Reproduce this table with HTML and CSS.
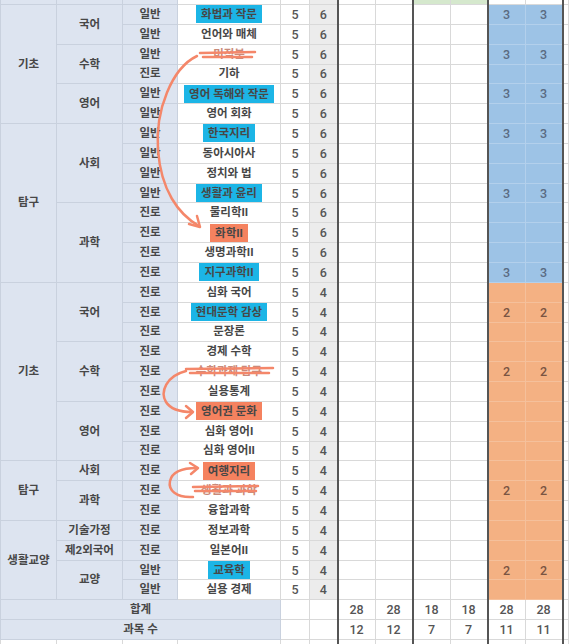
FILE: index.html
```html
<!DOCTYPE html>
<html lang="ko">
<head>
  <meta charset="UTF-8">
  <meta name="viewport" content="width=device-width, initial-scale=1.0">
  <title>교육과정 편성표</title>
  <link rel="stylesheet" href="styles.css">
</head>
<body>
  <div class="sheet">
    <table class="grid">
      <colgroup>
        <col class="c-area">
        <col class="c-subj">
        <col class="c-type">
        <col class="c-name">
        <col class="c-n1">
        <col class="c-n2">
        <col class="c-s sep">
        <col class="c-s">
        <col class="c-s sep">
        <col class="c-s">
        <col class="c-s sep">
        <col class="c-s">
        <col class="c-end sep">
      </colgroup>
      <tbody>
        <tr class="top">
          <td class="lbl"></td><td class="lbl"></td><td class="lbl"></td><td></td><td></td><td class="g"></td>
          <td></td><td></td><td class="grn"></td><td class="grn"></td><td></td><td></td><td></td>
        </tr>
        <!-- 6단위 -->
        <tr>
          <td class="lbl" rowspan="6">기초</td><td class="lbl" rowspan="2">국어</td><td class="lbl">일반</td>
          <td><span class="hl cyan">화법과 작문</span></td><td class="n">5</td><td class="n g">6</td>
          <td></td><td></td><td></td><td></td><td class="b">3</td><td class="b">3</td><td></td>
        </tr>
        <tr>
          <td class="lbl">일반</td><td>언어와 매체</td><td class="n">5</td><td class="n g">6</td>
          <td></td><td></td><td></td><td></td><td class="b"></td><td class="b"></td><td></td>
        </tr>
        <tr>
          <td class="lbl" rowspan="2">수학</td><td class="lbl">일반</td><td class="struck">미적분</td><td class="n">5</td><td class="n g">6</td>
          <td></td><td></td><td></td><td></td><td class="b">3</td><td class="b">3</td><td></td>
        </tr>
        <tr>
          <td class="lbl">진로</td><td>기하</td><td class="n">5</td><td class="n g">6</td>
          <td></td><td></td><td></td><td></td><td class="b"></td><td class="b"></td><td></td>
        </tr>
        <tr>
          <td class="lbl" rowspan="2">영어</td><td class="lbl">일반</td><td><span class="hl cyan">영어 독해와 작문</span></td><td class="n">5</td><td class="n g">6</td>
          <td></td><td></td><td></td><td></td><td class="b">3</td><td class="b">3</td><td></td>
        </tr>
        <tr>
          <td class="lbl">일반</td><td>영어 회화</td><td class="n">5</td><td class="n g">6</td>
          <td></td><td></td><td></td><td></td><td class="b"></td><td class="b"></td><td></td>
        </tr>
        <tr>
          <td class="lbl" rowspan="8">탐구</td><td class="lbl" rowspan="4">사회</td><td class="lbl">일반</td>
          <td><span class="hl cyan">한국지리</span></td><td class="n">5</td><td class="n g">6</td>
          <td></td><td></td><td></td><td></td><td class="b">3</td><td class="b">3</td><td></td>
        </tr>
        <tr>
          <td class="lbl">일반</td><td>동아시아사</td><td class="n">5</td><td class="n g">6</td>
          <td></td><td></td><td></td><td></td><td class="b"></td><td class="b"></td><td></td>
        </tr>
        <tr>
          <td class="lbl">일반</td><td>정치와 법</td><td class="n">5</td><td class="n g">6</td>
          <td></td><td></td><td></td><td></td><td class="b"></td><td class="b"></td><td></td>
        </tr>
        <tr>
          <td class="lbl">일반</td><td><span class="hl cyan">생활과 윤리</span></td><td class="n">5</td><td class="n g">6</td>
          <td></td><td></td><td></td><td></td><td class="b">3</td><td class="b">3</td><td></td>
        </tr>
        <tr>
          <td class="lbl" rowspan="4">과학</td><td class="lbl">진로</td><td>물리학II</td><td class="n">5</td><td class="n g">6</td>
          <td></td><td></td><td></td><td></td><td class="b"></td><td class="b"></td><td></td>
        </tr>
        <tr>
          <td class="lbl">진로</td><td><span class="hl coral">화학II</span></td><td class="n">5</td><td class="n g">6</td>
          <td></td><td></td><td></td><td></td><td class="b"></td><td class="b"></td><td></td>
        </tr>
        <tr>
          <td class="lbl">진로</td><td>생명과학II</td><td class="n">5</td><td class="n g">6</td>
          <td></td><td></td><td></td><td></td><td class="b"></td><td class="b"></td><td></td>
        </tr>
        <tr>
          <td class="lbl">진로</td><td><span class="hl cyan">지구과학II</span></td><td class="n">5</td><td class="n g">6</td>
          <td></td><td></td><td></td><td></td><td class="b">3</td><td class="b">3</td><td></td>
        </tr>
        <!-- 4단위 -->
        <tr>
          <td class="lbl" rowspan="9">기초</td><td class="lbl" rowspan="3">국어</td><td class="lbl">진로</td>
          <td>심화 국어</td><td class="n">5</td><td class="n g">4</td>
          <td></td><td></td><td></td><td></td><td class="o"></td><td class="o"></td><td></td>
        </tr>
        <tr>
          <td class="lbl">진로</td><td><span class="hl cyan">현대문학 감상</span></td><td class="n">5</td><td class="n g">4</td>
          <td></td><td></td><td></td><td></td><td class="o">2</td><td class="o">2</td><td></td>
        </tr>
        <tr>
          <td class="lbl">진로</td><td>문장론</td><td class="n">5</td><td class="n g">4</td>
          <td></td><td></td><td></td><td></td><td class="o"></td><td class="o"></td><td></td>
        </tr>
        <tr>
          <td class="lbl" rowspan="3">수학</td><td class="lbl">진로</td><td>경제 수학</td><td class="n">5</td><td class="n g">4</td>
          <td></td><td></td><td></td><td></td><td class="o"></td><td class="o"></td><td></td>
        </tr>
        <tr>
          <td class="lbl">진로</td><td class="struck">수학과제 탐구</td><td class="n">5</td><td class="n g">4</td>
          <td></td><td></td><td></td><td></td><td class="o">2</td><td class="o">2</td><td></td>
        </tr>
        <tr>
          <td class="lbl">진로</td><td>실용통계</td><td class="n">5</td><td class="n g">4</td>
          <td></td><td></td><td></td><td></td><td class="o"></td><td class="o"></td><td></td>
        </tr>
        <tr>
          <td class="lbl" rowspan="3">영어</td><td class="lbl">진로</td><td><span class="hl coral">영어권 문화</span></td><td class="n">5</td><td class="n g">4</td>
          <td></td><td></td><td></td><td></td><td class="o"></td><td class="o"></td><td></td>
        </tr>
        <tr>
          <td class="lbl">진로</td><td>심화 영어I</td><td class="n">5</td><td class="n g">4</td>
          <td></td><td></td><td></td><td></td><td class="o"></td><td class="o"></td><td></td>
        </tr>
        <tr>
          <td class="lbl">진로</td><td>심화 영어II</td><td class="n">5</td><td class="n g">4</td>
          <td></td><td></td><td></td><td></td><td class="o"></td><td class="o"></td><td></td>
        </tr>
        <tr>
          <td class="lbl" rowspan="3">탐구</td><td class="lbl">사회</td><td class="lbl">진로</td>
          <td><span class="hl coral">여행지리</span></td><td class="n">5</td><td class="n g">4</td>
          <td></td><td></td><td></td><td></td><td class="o"></td><td class="o"></td><td></td>
        </tr>
        <tr>
          <td class="lbl" rowspan="2">과학</td><td class="lbl">진로</td><td class="struck">생활과 과학</td><td class="n">5</td><td class="n g">4</td>
          <td></td><td></td><td></td><td></td><td class="o">2</td><td class="o">2</td><td></td>
        </tr>
        <tr>
          <td class="lbl">진로</td><td>융합과학</td><td class="n">5</td><td class="n g">4</td>
          <td></td><td></td><td></td><td></td><td class="o"></td><td class="o"></td><td></td>
        </tr>
        <tr>
          <td class="lbl" rowspan="4">생활교양</td><td class="lbl">기술가정</td><td class="lbl">진로</td>
          <td>정보과학</td><td class="n">5</td><td class="n g">4</td>
          <td></td><td></td><td></td><td></td><td class="o"></td><td class="o"></td><td></td>
        </tr>
        <tr>
          <td class="lbl">제2외국어</td><td class="lbl">진로</td><td>일본어II</td><td class="n">5</td><td class="n g">4</td>
          <td></td><td></td><td></td><td></td><td class="o"></td><td class="o"></td><td></td>
        </tr>
        <tr>
          <td class="lbl" rowspan="2">교양</td><td class="lbl">일반</td><td><span class="hl cyan">교육학</span></td><td class="n">5</td><td class="n g">4</td>
          <td></td><td></td><td></td><td></td><td class="o">2</td><td class="o">2</td><td></td>
        </tr>
        <tr>
          <td class="lbl">일반</td><td>실용 경제</td><td class="n">5</td><td class="n g">4</td>
          <td></td><td></td><td></td><td></td><td class="o"></td><td class="o"></td><td></td>
        </tr>
        <!-- 합계 -->
        <tr class="sum">
          <td class="lbl" colspan="4">합계</td><td></td><td class="w"></td>
          <td class="n">28</td><td class="n">28</td><td class="n">18</td><td class="n">18</td><td class="n">28</td><td class="n">28</td><td></td>
        </tr>
        <tr class="sum">
          <td class="lbl" colspan="4">과목 수</td><td></td><td class="w"></td>
          <td class="n">12</td><td class="n">12</td><td class="n">7</td><td class="n">7</td><td class="n">11</td><td class="n">11</td><td></td>
        </tr>
        <tr class="tail">
          <td></td><td></td><td></td><td></td><td></td><td class="w"></td>
          <td></td><td></td><td></td><td></td><td></td><td></td><td></td>
        </tr>
      </tbody>
    </table>

    <!-- 손글씨 표시: 취소선과 이동 화살표 -->
    <svg class="marks" width="569" height="644" viewBox="0 0 569 644">
      <g fill="none" stroke="#f4876a" stroke-width="2.5" stroke-linecap="round" stroke-linejoin="round">
        <path d="M200 53 L255 52"/>
        <path d="M203 57 L252 57"/>
        <path d="M197 56 C172 68 155 110 158 150 C161 190 178 214 199 226"/>
        <path d="M189 224 L200 227 L197 216"/>

        <path d="M186 369 L273 368"/>
        <path d="M190 373 L269 373"/>
        <path d="M186 371 C166 376 160 392 166 402 C171 410 181 412 192 412"/>
        <path d="M186 406 L193 412 L186 418"/>

        <path d="M193 487 L258 486"/>
        <path d="M195 491 L256 491"/>
        <path d="M193 497 C176 498 168 490 170 481 C172 472 183 468 197 468"/>
        <path d="M190 463 L198 468 L191 474"/>
      </g>
    </svg>
  </div>
</body>
</html>
```

FILE: styles.css
```css
:root {
  --line: #d9d9d9;
  --label-bg: #dde4f0;
  --label-line: #c9d1de;
  --gray-bg: #ececec;
  --blue-bg: #9dc3e6;
  --orange-bg: #f4b183;
  --green-bg: #d5e8cd;
  --cyan: #1cb5e6;
  --coral: #f5825f;
  --text: #474747;
}

* {
  margin: 0;
  padding: 0;
  box-sizing: border-box;
}

body {
  background: #ffffff;
  overflow: hidden;
  font-family: Roboto, "Noto Sans CJK KR", sans-serif;
  font-weight: 700;
  color: var(--text);
}

.sheet {
  position: relative;
  width: 569px;
  height: 644px;
}

.grid {
  width: 569px;
  table-layout: fixed;
  border-collapse: collapse;
  font-size: 11.5px;
  text-align: center;
}

.c-area { width: 56px; }
.c-subj { width: 66px; }
.c-type { width: 55px; }
.c-name { width: 103px; }
.c-n1 { width: 29px; }
.c-n2 { width: 28px; background: var(--gray-bg); }
.c-s { width: 37.5px; }
.c-end { width: 6px; }

col.sep {
  border-left: 2px solid #555555;
}

.grid td {
  border: 1px solid var(--line);
  padding: 0;
  height: 19.85px;
  line-height: 17px;
  white-space: nowrap;
  overflow: hidden;
}

.grid tr.top td {
  height: 4.5px;
  line-height: 0;
  border-top: none;
}

.grid tr.sum td {
  height: 20px;
}

.grid tr.tail td {
  height: 4px;
  line-height: 0;
  border-bottom: none;
}

.grid td.lbl {
  background: var(--label-bg);
  border-color: var(--label-line);
}

.grid td.n {
  font-size: 12.5px;
  font-weight: 500;
  color: #555555;
}

.grid td.g { background: var(--gray-bg); }
.grid td.w { background: #ffffff; }
.grid td.grn { background: var(--green-bg); }

.grid td.b {
  background: var(--blue-bg);
  border-color: #b3d0ec;
  color: #5a6b82;
  font-size: 12.5px;
  font-weight: 500;
}

.grid td.o {
  background: var(--orange-bg);
  border-color: #f5c09b;
  color: #7a5442;
  font-size: 12.5px;
  font-weight: 500;
}

.hl {
  display: inline-block;
  height: 18px;
  line-height: 18px;
  padding: 0 5px;
  vertical-align: middle;
}

.hl.cyan { background: var(--cyan); }
.hl.coral { background: var(--coral); }

.struck {
  color: #c98a7a;
}

.marks {
  position: absolute;
  top: 0;
  left: 0;
  pointer-events: none;
}
```
